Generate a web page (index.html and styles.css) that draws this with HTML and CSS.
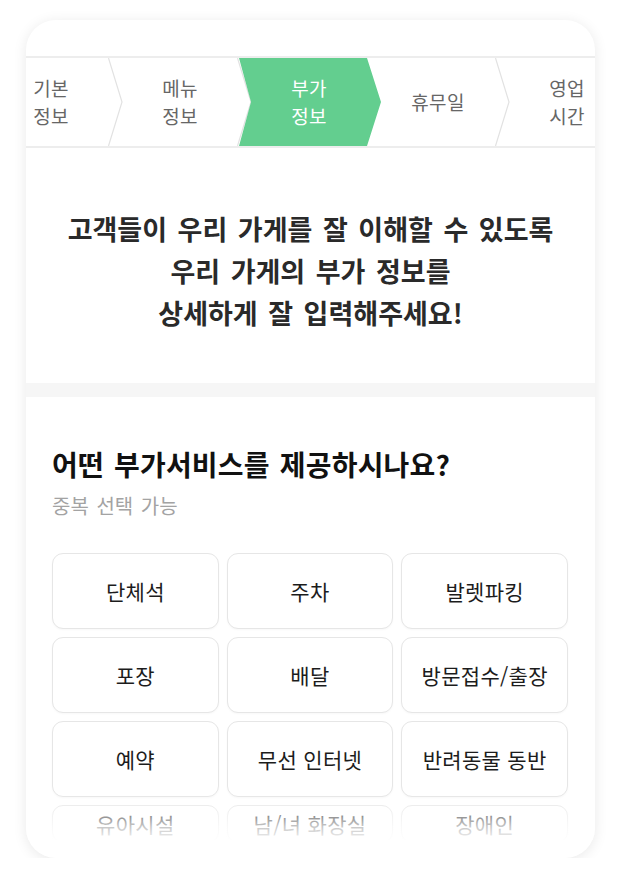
FILE: index.html
```html
<!DOCTYPE html>
<html lang="ko">
<head>
<meta charset="UTF-8" />
<meta name="viewport" content="width=device-width, initial-scale=1" />
<title>부가 정보</title>
<link rel="stylesheet" href="styles.css">
</head>
<body>

<div class="card">
  <div class="card-top"></div>

  <nav class="steps">
    <div class="step-track">
      <div class="step done">기본<br>정보
        <svg class="sep" viewBox="0 0 15 88" preserveAspectRatio="none"><polyline points="0.5,0 14,44 0.5,88" /></svg>
      </div>
      <div class="step done">메뉴<br>정보
        <svg class="sep" viewBox="0 0 15 88" preserveAspectRatio="none"><polyline points="0.5,0 14,44 0.5,88" /></svg>
      </div>
      <div class="step active">부가<br>정보</div>
      <div class="step">휴무일
        <svg class="sep" viewBox="0 0 15 88" preserveAspectRatio="none"><polyline points="0.5,0 14,44 0.5,88" /></svg>
      </div>
      <div class="step">영업<br>시간</div>
    </div>
  </nav>

  <header class="intro">
    고객들이 우리 가게를 잘 이해할 수 있도록<br>
    우리 가게의 부가 정보를<br>
    상세하게 잘 입력해주세요!
  </header>

  <div class="band"></div>

  <section class="question">
    <h2>어떤 부가서비스를 제공하시나요?</h2>
    <p class="hint">중복 선택 가능</p>
    <div class="options">
      <button class="option">단체석</button>
      <button class="option">주차</button>
      <button class="option">발렛파킹</button>
      <button class="option">포장</button>
      <button class="option">배달</button>
      <button class="option">방문접수/출장</button>
      <button class="option">예약</button>
      <button class="option">무선 인터넷</button>
      <button class="option">반려동물 동반</button>
      <button class="option">유아시설</button>
      <button class="option">남/녀 화장실</button>
      <button class="option">장애인</button>
    </div>
  </section>
</div>

</body>
</html>
```

FILE: styles.css
```css
/* Reset & base */
*, *::before, *::after {
  box-sizing: border-box;
}
body {
  margin: 0;
  background: #fff;
  font-family: 'Noto Sans CJK KR', 'Noto Sans', sans-serif;
  color: #222;
}

/* Card */
.card {
  width: 569px;
  height: 838px;
  margin: 20px 0 0 26px;
  background: #fff;
  border-radius: 30px;
  box-shadow: 0 2px 14px rgba(0, 0, 0, 0.09);
  overflow: hidden;
  display: flex;
  flex-direction: column;
  padding-bottom: 18px;
}
.card-top {
  height: 36px;
  flex: none;
}

/* Steps */
.steps {
  flex: none;
  height: 92px;
  border-top: 2px solid #ededed;
  border-bottom: 2px solid #ededed;
  overflow: hidden;
}
.step-track {
  display: flex;
  margin-left: -46px;
  height: 100%;
}
.step {
  position: relative;
  flex: none;
  width: 129px;
  height: 100%;
  display: flex;
  align-items: center;
  justify-content: center;
  padding-left: 13px;
  font-size: 19px;
  line-height: 28px;
  letter-spacing: 0.3px;
  text-align: center;
  color: #666;
}
.step .sep {
  position: absolute;
  top: 0;
  right: -14px;
  width: 15px;
  height: 100%;
  z-index: 1;
}
.step .sep polyline {
  fill: none;
  stroke: #e2e2e2;
  stroke-width: 1.2;
  vector-effect: non-scaling-stroke;
}
.step.active {
  color: #fff;
  z-index: 2;
}
.step.active::before {
  content: "";
  position: absolute;
  top: 0;
  left: 1px;
  width: 142px;
  height: 100%;
  background: #63ce8f;
  clip-path: polygon(0 0, 128px 0, 142px 50%, 128px 100%, 0 100%, 12px 50%);
  z-index: -1;
}

/* Intro */
.intro {
  flex: none;
  padding: 60px 0 49px;
  text-align: center;
  font-size: 27px;
  font-weight: 700;
  line-height: 42px;
  color: #2a2a2a;
  word-spacing: 3px;
}
.band {
  flex: none;
  height: 14px;
  background: #f6f6f6;
}

/* Question */
.question {
  position: relative;
  flex: 1;
  overflow: hidden;
  padding: 50px 27px 0 26px;
}
.question::after {
  content: "";
  position: absolute;
  left: 0;
  right: 0;
  bottom: 0;
  height: 46px;
  background: linear-gradient(rgba(255, 255, 255, 0) 0, rgba(255, 255, 255, 0.75) 70%, rgba(255, 255, 255, 0.95) 100%);
}
.question h2 {
  margin: 0;
  font-size: 28px;
  font-weight: 700;
  line-height: 34px;
  color: #111;
  letter-spacing: 0.2px;
  word-spacing: 2px;
}
.hint {
  margin: 11px 0 0;
  font-size: 20px;
  line-height: 28px;
  color: #a3a3a3;
  word-spacing: 2px;
}
.options {
  display: grid;
  grid-template-columns: repeat(3, 1fr);
  grid-template-rows: repeat(3, 76px) 1fr;
  gap: 8px;
  height: 290px;
  margin-top: 33px;
}
.option {
  border: 1.5px solid #e6e6e6;
  border-radius: 11px;
  background: #fff;
  font-family: inherit;
  font-size: 21px;
  letter-spacing: 0.3px;
  color: #1c1c1c;
  box-shadow: 0 1px 2px rgba(0, 0, 0, 0.03);
  padding: 0;
}
```
